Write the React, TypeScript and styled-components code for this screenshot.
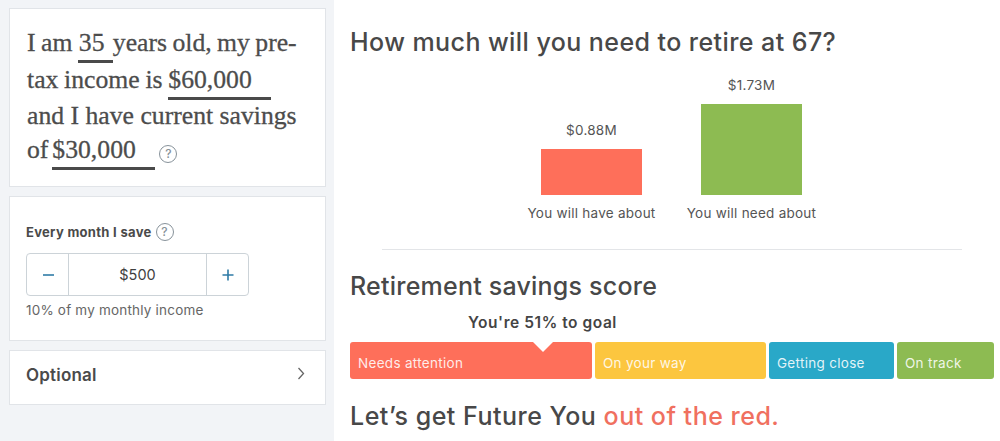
import React from "react";
import styled, { createGlobalStyle } from "styled-components";

const Global = createGlobalStyle`
  html, body { margin: 0; padding: 0; background: #fff; }
  body { width: 1000px; height: 441px; overflow: hidden; font-family: "Inter", "Liberation Sans", sans-serif; color: #4a4a4a; }
`;

const Page = styled.div`
  display: flex;
  width: 1000px;
  height: 441px;
  overflow: hidden;
`;

const Sidebar = styled.aside`
  width: 334px;
  flex: none;
  box-sizing: border-box;
  background: #f2f4f7;
  padding: 8px 8px 0 9px;
  display: flex;
  flex-direction: column;
  gap: 9px;
`;

const Card = styled.section`
  background: #fff;
  border: 1px solid #e1e4e8;
  box-sizing: border-box;
`;

const StoryCard = styled(Card)`
  height: 179px;
  padding: 16px 0 0 17px;
  font-family: "Liberation Serif", "Times New Roman", serif;
  font-size: 25.7px;
  color: #4c4c4c;
  -webkit-text-stroke: 0.3px #4c4c4c;
  white-space: nowrap;
`;

const StoryLine = styled.div<{ $h: number; $tight: number }>`
  height: ${(p) => p.$h}px;
  line-height: 36px;
  word-spacing: ${(p) => p.$tight}px;
`;

const Blank = styled.span<{ $w: number }>`
  display: inline-block;
  width: ${(p) => p.$w}px;
  height: 36px;
  vertical-align: top;
  position: relative;
  white-space: nowrap;
  &::after {
    content: "";
    position: absolute;
    left: 0;
    right: 0;
    top: 35px;
    height: 3px;
    background: #4a4a4a;
  }
`;

const AgeBlank = styled(Blank)`
  padding-left: 1px;
  box-sizing: border-box;
`;

const Help = styled.span<{ $size: number }>`
  display: inline-flex;
  align-items: center;
  justify-content: center;
  width: ${(p) => p.$size}px;
  height: ${(p) => p.$size}px;
  box-sizing: border-box;
  border: 1.6px solid #87929a;
  border-radius: 50%;
  color: #87929a;
  font-family: "Inter", sans-serif;
  font-size: ${(p) => p.$size - 6}px;
  font-weight: 500;
  line-height: 1;
  -webkit-text-stroke: 0;
`;

const StoryHelp = styled(Help)`
  margin-left: 4px;
  vertical-align: 0;
`;

const SaveCard = styled(Card)`
  height: 145px;
  padding: 25px 16px 0;
`;

const SaveLabel = styled.div`
  display: flex;
  align-items: center;
  gap: 4px;
  font-size: 13px;
  font-weight: 700;
  letter-spacing: 0.3px;
  color: #4a4a4a;
  height: 20px;
`;

const Stepper = styled.div`
  display: flex;
  width: 223px;
  height: 43px;
  margin-top: 11px;
  box-sizing: border-box;
  border: 1px solid #ccd3d8;
  border-radius: 4px;
`;

const StepButton = styled.div`
  width: 41px;
  flex: none;
  display: flex;
  align-items: center;
  justify-content: center;
  color: #2f7ba6;
`;

const StepValue = styled.div`
  flex: 1;
  display: flex;
  align-items: center;
  justify-content: center;
  border-left: 1px solid #ccd3d8;
  border-right: 1px solid #ccd3d8;
  font-size: 14.5px;
  font-weight: 400;
  color: #3f3f3f;
`;

const Hint = styled.div`
  margin-top: 5px;
  font-size: 13.5px;
  letter-spacing: 0.2px;
  line-height: 18px;
  color: #666;
`;

const OptionalCard = styled(Card)`
  height: 55px;
  padding: 0 20px 5px 16px;
  display: flex;
  align-items: center;
  justify-content: space-between;
  font-size: 17px;
  font-weight: 600;
  letter-spacing: 0.2px;
  color: #4a4a4a;
`;

const Chevron = styled.svg`
  margin-bottom: 3px;
`;

const Main = styled.main`
  flex: 1;
  padding: 0 6px 0 16px;
  display: flex;
  flex-direction: column;
  box-sizing: border-box;
`;

const Heading = styled.h2`
  margin: 0;
  font-size: 25px;
  line-height: 30px;
  font-weight: 500;
  letter-spacing: 0.35px;
  color: #484848;
  white-space: nowrap;
`;

const FirstHeading = styled(Heading)`
  margin-top: 27px;
  letter-spacing: 0.43px;
`;

const Chart = styled.div`
  display: flex;
  align-items: flex-end;
  justify-content: center;
  margin: 16px 0 0 -1px;
  gap: 31px;
  height: 149px;
`;

const Column = styled.div`
  width: 129px;
  display: flex;
  flex-direction: column;
  align-items: center;
  font-size: 13.5px;
  letter-spacing: 0.25px;
  color: #555;
`;

const Value = styled.div`
  line-height: 18px;
  margin-bottom: 10px;
`;

const Bar = styled.div<{ $h: number; $c: string }>`
  width: 101px;
  height: ${(p) => p.$h}px;
  background: ${(p) => p.$c};
`;

const Caption = styled.div`
  margin-top: 9px;
  line-height: 18px;
  white-space: nowrap;
`;

const Rule = styled.hr`
  border: 0;
  height: 1px;
  background: #e3e5e8;
  margin: 27px 32px 0 32px;
  width: 580px;
`;

const ScoreHeading = styled(Heading)`
  margin-top: 21px;
  letter-spacing: 0.22px;
`;

const Goal = styled.div`
  margin-top: 12px;
  padding-left: 118px;
  font-size: 15.5px;
  line-height: 20px;
  font-weight: 600;
  letter-spacing: 0.55px;
  color: #444;
  white-space: nowrap;
`;

const Segments = styled.div`
  display: flex;
  gap: 3px;
  margin-top: 9px;
`;

const Segment = styled.div<{ $w: number; $c: string }>`
  position: relative;
  width: ${(p) => p.$w}px;
  height: 37px;
  box-sizing: border-box;
  padding: 13px 0 0 8px;
  background: ${(p) => p.$c};
  border-radius: 3px;
  color: rgba(255, 255, 255, 0.88);
  font-size: 13.5px;
  letter-spacing: 0.3px;
  line-height: 17px;
  white-space: nowrap;
`;

const Notch = styled.span`
  position: absolute;
  top: 0;
  left: 183px;
  width: 0;
  height: 0;
  border-left: 10px solid transparent;
  border-right: 10px solid transparent;
  border-top: 10px solid #fff;
`;

const Closing = styled(Heading)`
  margin-top: 22px;
  letter-spacing: 0.5px;
`;

const Red = styled.span`
  color: #f0705f;
`;

export default function App() {
  return (
    <Page>
      <Global />
      <Sidebar>
        <StoryCard>
          <StoryLine $h={37} $tight={-1}>
            I am <AgeBlank $w={35}>35</AgeBlank>years old, my pre-
          </StoryLine>
          <StoryLine $h={36} $tight={-0.7}>
            tax income is <Blank $w={103}>$60,000</Blank>
          </StoryLine>
          <StoryLine $h={34} $tight={0}>and I have current savings</StoryLine>
          <StoryLine $h={36} $tight={-2.5}>
            of <Blank $w={103}>$30,000</Blank>
            <StoryHelp $size={18}>?</StoryHelp>
          </StoryLine>
        </StoryCard>
        <SaveCard>
          <SaveLabel>
            Every month I save <Help $size={18}>?</Help>
          </SaveLabel>
          <Stepper>
            <StepButton>
              <svg width="14" height="14" viewBox="0 0 14 14">
                <path d="M2 7h11" stroke="currentColor" strokeWidth="1.6" />
              </svg>
            </StepButton>
            <StepValue>$500</StepValue>
            <StepButton>
              <svg width="14" height="14" viewBox="0 0 14 14">
                <path d="M1.5 7h11M7 1.5v11" stroke="currentColor" strokeWidth="1.6" />
              </svg>
            </StepButton>
          </Stepper>
          <Hint>10% of my monthly income</Hint>
        </SaveCard>
        <OptionalCard>
          Optional
          <Chevron width="8" height="13" viewBox="0 0 8 13" fill="none">
            <path d="M1.5 1 6.5 6.5l-5 5.5" stroke="#666" strokeWidth="1.3" />
          </Chevron>
        </OptionalCard>
      </Sidebar>
      <Main>
        <FirstHeading>How much will you need to retire at 67?</FirstHeading>
        <Chart>
          <Column>
            <Value>$0.88M</Value>
            <Bar $h={46} $c="#fe6f5a" />
            <Caption>You will have about</Caption>
          </Column>
          <Column>
            <Value>$1.73M</Value>
            <Bar $h={91} $c="#8dbb52" />
            <Caption>You will need about</Caption>
          </Column>
        </Chart>
        <Rule />
        <ScoreHeading>Retirement savings score</ScoreHeading>
        <Goal>You're 51% to goal</Goal>
        <Segments>
          <Segment $w={242} $c="#fe6f5a">
            Needs attention
            <Notch />
          </Segment>
          <Segment $w={171} $c="#fcc63f">On your way</Segment>
          <Segment $w={125} $c="#29a8c8">Getting close</Segment>
          <Segment $w={97} $c="#8dbb52">On track</Segment>
        </Segments>
        <Closing>
          Let’s get Future You <Red>out of the red.</Red>
        </Closing>
      </Main>
    </Page>
  );
}
